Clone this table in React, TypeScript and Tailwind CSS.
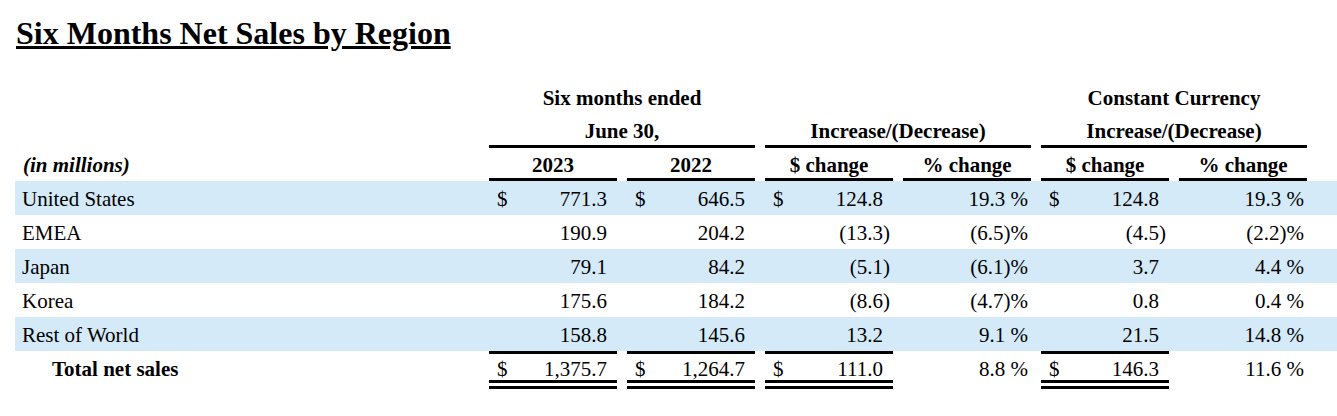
import clsx from 'clsx';

const FONT_CLASS = 'font-[family-name:Liberation_Serif,Times_New_Roman,serif]';
const GRID_CLASS = 'grid grid-cols-[464px_repeat(6,128px)] gap-x-[10px]';
const SHADE_CLASS = 'bg-[#d4eaf9]';
const HEAD_CELL_CLASS = 'flex items-end justify-center border-b-[3px] border-black';

type SalesRow = {
  label: string;
  y2023: string;
  y2022: string;
  change: string;
  pct: string;
  ccChange: string;
  ccPct: string;
  dollar?: boolean;
  shaded?: boolean;
};

const ROWS: SalesRow[] = [
  { label: 'United States', y2023: '771.3', y2022: '646.5', change: '124.8', pct: '19.3 %', ccChange: '124.8', ccPct: '19.3 %', dollar: true, shaded: true },
  { label: 'EMEA', y2023: '190.9', y2022: '204.2', change: '(13.3)', pct: '(6.5)%', ccChange: '(4.5)', ccPct: '(2.2)%' },
  { label: 'Japan', y2023: '79.1', y2022: '84.2', change: '(5.1)', pct: '(6.1)%', ccChange: '3.7', ccPct: '4.4 %', shaded: true },
  { label: 'Korea', y2023: '175.6', y2022: '184.2', change: '(8.6)', pct: '(4.7)%', ccChange: '0.8', ccPct: '0.4 %' },
  { label: 'Rest of World', y2023: '158.8', y2022: '145.6', change: '13.2', pct: '9.1 %', ccChange: '21.5', ccPct: '14.8 %', shaded: true },
];

const TOTAL: SalesRow = {
  label: 'Total net sales',
  y2023: '1,375.7',
  y2022: '1,264.7',
  change: '111.0',
  pct: '8.8 %',
  ccChange: '146.3',
  ccPct: '11.6 %',
  dollar: true,
};

// positive numbers keep a hidden ")" so digits line up with bracketed negatives
const Amount = ({ value }: { value: string }) => (
  <span>
    {value}
    {!value.endsWith(')') && <span className="invisible">)</span>}
  </span>
);

const MoneyCell = ({ value, dollar, className }: { value: string; dollar?: boolean; className?: string }) => (
  <div className={clsx('flex justify-between pl-[8px] pr-[3px]', className)}>
    <span>{dollar ? '$' : ''}</span>
    <Amount value={value} />
  </div>
);

const PctCell = ({ value, className }: { value: string; className?: string }) => (
  <div className={clsx('pr-[3px] text-right', className)}>{value}</div>
);

const DataRow = ({ row }: { row: SalesRow }) => (
  <div className={clsx(GRID_CLASS, 'h-[34px] pt-[2px] leading-[32px]', row.shaded && SHADE_CLASS)}>
    <div className="pl-[7px]">{row.label}</div>
    <MoneyCell value={row.y2023} dollar={row.dollar} />
    <MoneyCell value={row.y2022} dollar={row.dollar} />
    <MoneyCell value={row.change} dollar={row.dollar} />
    <PctCell value={row.pct} />
    <MoneyCell value={row.ccChange} dollar={row.dollar} className="pl-[7px]" />
    <PctCell value={row.ccPct} className="pr-[2px]" />
  </div>
);

const TotalMoney = ({ value }: { value: string }) => (
  <div className="flex flex-col border-t-[3px] border-black">
    <MoneyCell value={value} dollar className="h-[26px] items-end" />
    <div className="h-[9px] border-y-[3px] border-black" />
  </div>
);

const TotalPct = ({ value, className }: { value: string; className?: string }) => (
  <div className="border-t-[3px] border-transparent">
    <PctCell value={value} className={clsx('flex h-[26px] items-end justify-end', className)} />
  </div>
);

export default function App() {
  return (
    <div className={clsx(FONT_CLASS, 'w-[1337px] h-[416px] bg-white text-black text-[21px]')}>
      <div className="pl-[16px] pt-[17px] text-[32px] leading-[32px] font-bold">
        <span className="underline decoration-[3px] underline-offset-[2px]">Six Months Net Sales by Region</span>
      </div>

      <div className="pl-[15px] leading-[21px]">
        <div className={clsx(GRID_CLASS, 'h-[66px] items-end pb-[6px] font-bold')}>
          <div />
          <div className="col-span-2 text-center">Six months ended</div>
          <div className="col-span-2" />
          <div className="col-span-2 text-center">Constant Currency</div>
        </div>

        <div className={clsx(GRID_CLASS, 'h-[33px] font-bold')}>
          <div />
          <div className={clsx(HEAD_CELL_CLASS, 'col-span-2 pb-[3px]')}>June 30,</div>
          <div className={clsx(HEAD_CELL_CLASS, 'col-span-2 pb-[3px]')}>Increase/(Decrease)</div>
          <div className={clsx(HEAD_CELL_CLASS, 'col-span-2 pb-[3px]')}>Increase/(Decrease)</div>
        </div>

        <div className={clsx(GRID_CLASS, 'h-[33px] font-bold')}>
          <div className="flex items-end pb-[5px] pl-[8px] italic">(in millions)</div>
          {['2023', '2022', '$ change', '% change', '$ change', '% change'].map((h, i) => (
            <div key={i} className={clsx(HEAD_CELL_CLASS, 'pb-[2px]')}>
              {h}
            </div>
          ))}
        </div>

        {ROWS.map((row) => (
          <DataRow key={row.label} row={row} />
        ))}

        <div className={clsx(GRID_CLASS, 'items-start')}>
          <div className="flex h-[29px] items-end pl-[37px] font-bold">{TOTAL.label}</div>
          <TotalMoney value={TOTAL.y2023} />
          <TotalMoney value={TOTAL.y2022} />
          <TotalMoney value={TOTAL.change} />
          <TotalPct value={TOTAL.pct} />
          <TotalMoney value={TOTAL.ccChange} />
          <TotalPct value={TOTAL.ccPct} className="pr-[2px]" />
        </div>
      </div>
    </div>
  );
}
